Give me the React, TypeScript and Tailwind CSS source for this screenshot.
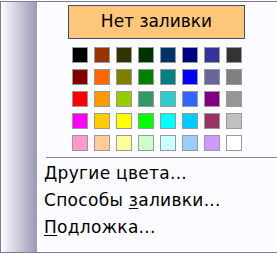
const palette = [
  ["#000000", "#993300", "#333300", "#003300", "#003366", "#000080", "#333399", "#333333"],
  ["#800000", "#ff6600", "#808000", "#008000", "#008080", "#0000ff", "#666699", "#808080"],
  ["#ff0000", "#ff9900", "#99cc00", "#339966", "#33cccc", "#3366ff", "#800080", "#969696"],
  ["#ff00ff", "#ffcc00", "#ffff00", "#00ff00", "#00ffff", "#00ccff", "#993366", "#c0c0c0"],
  ["#ff99cc", "#ffcc99", "#ffff99", "#ccffcc", "#ccffff", "#99ccff", "#cc99ff", "#ffffff"],
];

type Item = { before: string; key: string; after: string };

const items: Item[] = [
  { before: "", key: "Д", after: "ругие цвета..." },
  { before: "Способы ", key: "з", after: "аливки..." },
  { before: "", key: "П", after: "одложка..." },
];

export default function App() {
  return (
    <div className="h-[253px] w-[277px] overflow-hidden bg-white font-['DejaVu_Sans',sans-serif] text-black">
      <div className="mt-px flex h-[252px] border-b border-l border-t border-[#7c7c94] bg-[#fcfbff]">
        <div className="ml-[2px] w-[34px] bg-gradient-to-r from-[#f7f7fd] to-[#9b99b5]" />
        <div className="flex flex-1 flex-col">
          <button className="ml-[31px] mt-[3px] flex h-[34px] w-[177px] items-center justify-center border border-[#4b4b6f] bg-[#ffc77b] text-[17px]">
            Нет заливки
          </button>
          <div className="ml-[35px] mt-[8px] grid grid-cols-[repeat(8,16px)] gap-[6px]">
            {palette.flat().map((c, i) => (
              <div key={i} className="h-4 w-4 border border-[#9a9a9a]" style={{ backgroundColor: c }} />
            ))}
          </div>
          <div className="ml-[9px] mt-[6px] h-px bg-[#8584a2]" />
          <div className="mt-[2px] flex flex-col">
            {items.map((it) => (
              <div key={it.key} className="h-[27px] pl-[7px] text-[17px] leading-[27px] tracking-[0.3px]">
                {it.before}
                <span className="underline underline-offset-2">{it.key}</span>
                {it.after}
              </div>
            ))}
          </div>
        </div>
      </div>
    </div>
  );
}
